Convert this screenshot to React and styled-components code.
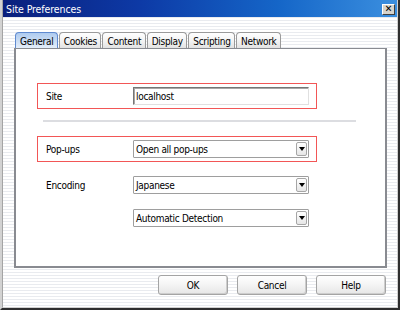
import React from 'react'
import styled, { createGlobalStyle } from 'styled-components'

const GlobalStyle = createGlobalStyle`
  html, body {
    margin: 0;
    padding: 0;
    background: #ffffff;
  }
`

const Window = styled.div`
  width: 400px;
  height: 310px;
  box-sizing: border-box;
  display: flex;
  flex-direction: column;
  border-left: 2px solid #d2d2d2;
  border-right: 2px solid #2e2e2e;
  border-bottom: 2px solid #2e2e2e;
  font-family: "DejaVu Sans Condensed", "Liberation Sans", Arial, sans-serif;
  font-size: 10px;
  letter-spacing: -0.3px;
  color: #000;
`

const Frame = styled.div`
  flex: 1;
  display: flex;
  flex-direction: column;
  border-left: 1px solid #a4a4a4;
  border-right: 1px solid #d0d0d0;
  border-bottom: 1px solid #d0d0d0;
  background: repeating-linear-gradient(to bottom, #ffffff 0 2px, #e9ebef 2px 3px);
`

const TitleBar = styled.div`
  height: 17px;
  flex: none;
  display: flex;
  align-items: center;
  justify-content: space-between;
  padding: 0 2px 0 3px;
  background: linear-gradient(to right, #0a1f7c 0%, #0d3aa6 35%, #1566c8 70%, #3b8fdf 100%);
  color: #ffffff;
  font-size: 10.5px;
  letter-spacing: -0.1px;
`

const CloseButton = styled.div`
  width: 13px;
  height: 11px;
  box-sizing: border-box;
  margin-top: 1px;
  display: flex;
  align-items: center;
  justify-content: center;
  background: #d6d3cc;
  border: 1px solid;
  border-color: #ffffff #404040 #404040 #ffffff;
  color: #000;
  font-size: 10px;
  font-weight: bold;
  line-height: 1;
`

const Body = styled.div`
  flex: 1;
  display: flex;
  flex-direction: column;
  padding: 15px 10px 0 11px;
`

const TabStrip = styled.div`
  display: flex;
  gap: 1px;
  margin-left: 1px;
  height: 16px;
`

const Tab = styled.div`
  display: flex;
  align-items: center;
  padding: 1px 3.5px 0 4px;
  box-sizing: border-box;
  border: 1px solid ${p => (p.$active ? '#5f8ad0' : '#9a9a9a')};
  border-bottom: none;
  border-radius: 4px 4px 0 0;
  background: ${p =>
    p.$active
      ? 'linear-gradient(to bottom, #aecbef 0%, #c9dcf4 50%, #e4eefa 100%)'
      : 'linear-gradient(to bottom, #ffffff 0%, #f1f1f1 60%, #e2e2e2 100%)'};
`

const Panel = styled.div`
  height: 220px;
  box-sizing: border-box;
  background: #ffffff;
  border: 2px solid #898b91;
  border-top-width: 1px;
  padding: 34px 0 0 21px;
`

const Row = styled.div`
  width: 280px;
  height: 26px;
  box-sizing: border-box;
  display: flex;
  align-items: center;
  padding: 0 7px 0 8px;
  border: 1px solid ${p => (p.$marked ? '#f25656' : 'transparent')};
`

const Label = styled.span`
  width: 87px;
  flex: none;
`

const TextField = styled.input`
  width: 176px;
  height: 18px;
  box-sizing: border-box;
  margin: 0;
  padding: 0 2px;
  border: 1px solid;
  border-color: #767676 #e0e0e0 #e0e0e0 #767676;
  box-shadow: inset 1px 1px 0 #a8a8a8;
  background: #ffffff;
  font: inherit;
  letter-spacing: inherit;
  color: #000;
  outline: none;
`

const Select = styled.div`
  width: 176px;
  height: 18px;
  box-sizing: border-box;
  display: flex;
  align-items: center;
  justify-content: space-between;
  padding: 0 1px 0 2px;
  border: 1px solid #9e9e9e;
  border-radius: 1px;
  background: #ffffff;
`

const ArrowBox = styled.div`
  width: 11px;
  height: 14px;
  box-sizing: border-box;
  display: flex;
  align-items: center;
  justify-content: center;
  border: 1px solid #a6a6a6;
  border-radius: 2px;
  background: linear-gradient(to bottom, #ffffff, #e6e6e6);

  &::after {
    content: '';
    border-left: 3px solid transparent;
    border-right: 3px solid transparent;
    border-top: 4px solid #000;
  }
`

const Separator = styled.div`
  width: 313px;
  height: 2px;
  margin: 11px 0 14px 6px;
  background: #dcdde1;
`

const SelectGroup = styled.div`
  display: flex;
  flex-direction: column;
  gap: 7px;
  margin-top: 10px;
`

const ButtonBar = styled.div`
  display: flex;
  justify-content: flex-end;
  gap: 9px;
  margin: 7px 1px 0 0;
`

const Button = styled.button`
  width: 70px;
  height: 20px;
  margin: 0;
  padding: 0;
  box-sizing: border-box;
  border: 1px solid #a4a4a4;
  border-radius: 3px;
  box-shadow: inset -1px -1px 0 #cdcdcd;
  background: linear-gradient(to bottom, #ffffff 0%, #f4f4f4 50%, #e6e6e6 100%);
  font: inherit;
  letter-spacing: inherit;
  color: #000;
`

const tabs = ['General', 'Cookies', 'Content', 'Display', 'Scripting', 'Network']

const Dropdown = ({ value }) => (
  <Select>
    <span>{value}</span>
    <ArrowBox />
  </Select>
)

const App = () => {
  return (
    <Window>
      <GlobalStyle />
      <Frame>
        <TitleBar>
          <span>Site Preferences</span>
          <CloseButton>✕</CloseButton>
        </TitleBar>
        <Body>
          <TabStrip>
            {tabs.map((t, i) => (
              <Tab key={t} $active={i === 0}>{t}</Tab>
            ))}
          </TabStrip>
          <Panel>
            <Row $marked>
              <Label>Site</Label>
              <TextField readOnly value="localhost" />
            </Row>
            <Separator />
            <Row $marked>
              <Label>Pop-ups</Label>
              <Dropdown value="Open all pop-ups" />
            </Row>
            <SelectGroup>
              <Row>
                <Label>Encoding</Label>
                <Dropdown value="Japanese" />
              </Row>
              <Row>
                <Label />
                <Dropdown value="Automatic Detection" />
              </Row>
            </SelectGroup>
          </Panel>
          <ButtonBar>
            <Button>OK</Button>
            <Button>Cancel</Button>
            <Button>Help</Button>
          </ButtonBar>
        </Body>
      </Frame>
    </Window>
  )
}

export default App
